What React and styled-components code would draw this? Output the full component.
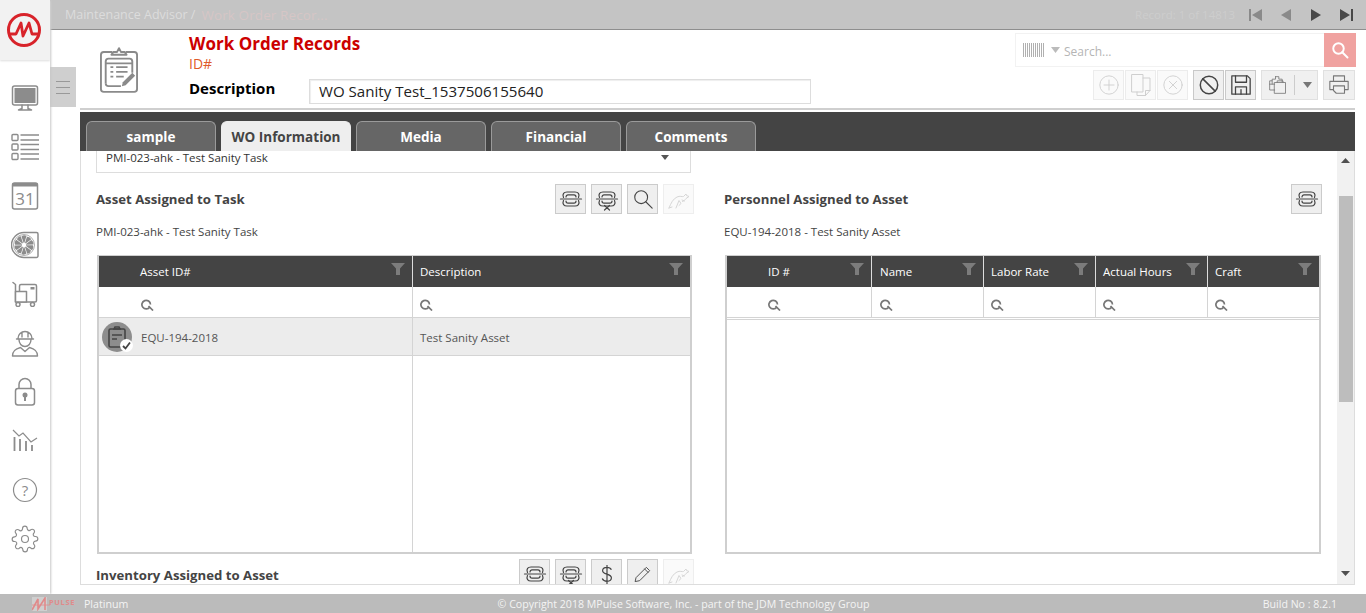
import React from 'react';
import styled, { createGlobalStyle } from 'styled-components';

const GlobalStyle = createGlobalStyle`
  html, body { margin: 0; padding: 0; height: 100%; overflow: hidden; background: #fff; }
  * { box-sizing: border-box; }
  body { font-family: "Open Sans", "Noto Sans", "Liberation Sans", sans-serif; }
`;

const Shell = styled.div`
  display: grid;
  grid-template-columns: 50px 1fr;
  grid-template-rows: 594px 19px;
  width: 1366px;
  height: 613px;
`;

const Sidebar = styled.nav`
  display: flex;
  flex-direction: column;
  align-items: center;
  background: #fff;
  box-shadow: 1px 0 2px #c8c8c8;
  z-index: 2;
`;

const LogoBox = styled.div`
  display: flex;
  align-items: center;
  justify-content: center;
  width: 100%;
  height: 60px;
  margin-bottom: 13px;
  padding-right: 2px;
  background: #f2f2f2;
  box-shadow: 0 1px 2px #ddd;
`;

const NavItem = styled.div`
  display: flex;
  align-items: center;
  justify-content: center;
  width: 100%;
  height: 49px;
  color: #8c8c8c;
`;

const Main = styled.div`
  display: flex;
  flex-direction: column;
  min-width: 0;
`;

const TopBar = styled.div`
  display: flex;
  align-items: center;
  height: 30px;
  padding: 0 5px 0 15px;
  background: #c4c4c4;
  border-bottom: 1px solid #8e8e8e;
  font-size: 12.5px;
  color: #dcdcdc;
`;

const Crumb = styled.span`
  color: ${p => p.$current ? '#d6c6c6' : '#dcdcdc'};
  margin-right: ${p => p.$current ? '0' : '6px'};
  font-size: ${p => p.$current ? '13.5px' : '12.5px'};
  letter-spacing: ${p => p.$current ? '0.1px' : '0'};
`;

const RecordInfo = styled.span`
  margin-left: auto;
  margin-right: 6px;
  color: #cdcdcd;
  font-size: 11.5px;
`;

const Pager = styled.button`
  display: flex;
  align-items: center;
  justify-content: center;
  width: 30px;
  height: 24px;
  padding: 0;
  border: 0;
  background: transparent;
  color: ${p => p.$dim ? '#8a8a8a' : '#484848'};
`;

const Work = styled.div`
  flex: 1;
  display: flex;
  min-height: 0;
`;

const Gutter = styled.div`
  width: 30px;
  flex: none;
`;

const Toggle = styled.button`
  display: flex;
  flex-direction: column;
  justify-content: center;
  gap: 5px;
  width: 26px;
  height: 40px;
  margin-top: 37px;
  padding: 0 6px;
  border: 0;
  background: #cfcfcf;
  span { display: block; height: 1px; background: #999; }
`;

const Column = styled.div`
  display: flex;
  flex-direction: column;
  width: 1275px;
  padding-bottom: 9px;
`;

const Header = styled.header`
  display: flex;
  height: 80px;
  margin-bottom: 2px;
  padding: 3px 0 0 20px;
  border-bottom: 2px solid #cfcfcf;
`;

const RecordIcon = styled.div`
  width: 40px;
  margin: 11px 49px 0 0;
  color: #8a8a8a;
`;

const TitleBlock = styled.div`
  flex: 1;
  min-width: 0;
`;

const Title = styled.h1`
  margin: -1px 0 0;
  font-size: 17px;
  line-height: 23px;
  font-weight: 700;
  color: #cc0000;
`;

const RecordId = styled.div`
  margin-bottom: 7px;
  font-size: 14px;
  line-height: 17px;
  color: #df5a2a;
`;

const DescRow = styled.div`
  display: flex;
  align-items: flex-start;
`;

const DescLabel = styled.label`
  width: 120px;
  font-size: 15px;
  line-height: 19px;
  font-weight: 700;
  color: #000;
`;

const DescInput = styled.div`
  width: 502px;
  height: 25px;
  padding-left: 9px;
  border: 1px solid #ddd;
  box-shadow: inset 1px 1px 1px #eee;
  font-size: 15.1px;
  line-height: 23px;
  color: #222;
`;

const ToolsBlock = styled.div`
  display: flex;
  flex-direction: column;
  align-items: flex-end;
  gap: 3px;
  width: 341px;
  margin-right: -1px;
`;

const SearchBox = styled.div`
  display: flex;
  align-items: center;
  width: 341px;
  height: 34px;
  padding-left: 7px;
  border: 1px solid #f2f2f2;
  color: #bbb;
  font-size: 12px;
`;

const CodeGap = styled.span`
  width: 7px;
`;

const SearchText = styled.span`
  flex: 1;
  margin-left: 4px;
  padding-top: 2px;
  color: #b5b5b5;
`;

const SearchButton = styled.button`
  display: flex;
  align-items: center;
  justify-content: center;
  width: 32px;
  height: 34px;
  margin: 0 -1px 0 0;
  padding: 0;
  border: 0;
  background: #f0a2a0;
  color: #fff;
`;

const ActionRow = styled.div`
  display: flex;
  width: 100%;
  padding: 0 1px 0 77px;
`;

const ToolButton = styled.button`
  display: flex;
  align-items: center;
  justify-content: center;
  flex: none;
  width: ${p => p.$w || 31}px;
  height: 30px;
  margin-left: ${p => p.$gap || 1}px;
  padding: 0;
  background: ${p => p.$off ? '#fafafa' : '#f0f0f0'};
  border: 1px solid ${p => p.$off ? '#ececec' : p.$mid ? '#e0e0e0' : '#c9c9c9'};
  color: ${p => p.$off ? '#cfcfcf' : p.$mid ? '#777' : '#444'};
`;

const SplitLine = styled.span`
  width: 1px;
  height: 20px;
  margin: 0 8px 0 6px;
  background: #ccc;
`;

const TabBar = styled.div`
  display: flex;
  align-items: flex-end;
  gap: 5px;
  height: 39px;
  padding: 0 0 0 6px;
  background: #444;
`;

const Tab = styled.div`
  width: 130px;
  height: 30px;
  border: 1px solid ${p => p.$active ? '#eee' : '#9a9a9a'};
  border-bottom: 0;
  border-radius: 6px 6px 0 0;
  background: ${p => p.$active ? '#eee' : '#666'};
  color: ${p => p.$active ? '#444' : '#fff'};
  font-size: 13.5px;
  font-weight: 700;
  line-height: 30px;
  text-align: center;
`;

const Content = styled.div`
  flex: 1;
  display: flex;
  min-height: 0;
  overflow: hidden;
  border: 1px solid #ddd;
  border-top: 0;
`;

const Scroller = styled.div`
  flex: 1;
  min-width: 0;
  padding: 0 15px;
  overflow: hidden;
`;

const SelectRow = styled.div`
  display: flex;
  align-items: center;
  justify-content: space-between;
  width: 595px;
  height: 22px;
  padding: 0 21px 8px 9px;
  border: 1px solid #ddd;
  border-top: 0;
  font-size: 11.5px;
  color: #333;
`;

const Caret = styled.span`
  width: 0;
  height: 0;
  border-left: 4.5px solid transparent;
  border-right: 4.5px solid transparent;
  border-top: 5px solid #555;
`;

const Panels = styled.div`
  display: grid;
  grid-template-columns: 597px 598px;
  column-gap: 31px;
  margin-top: 10px;
`;

const Panel = styled.section`
  min-width: 0;
`;

const PanelHead = styled.div`
  display: flex;
  align-items: center;
  justify-content: space-between;
  height: 31px;
  margin-right: ${p => p.$over ? -1 : 0}px;
`;

const PanelTitle = styled.h2`
  margin: 0;
  font-size: 13.2px;
  font-weight: 700;
  color: #444;
`;

const ButtonGroup = styled.div`
  display: flex;
  gap: 5px;
`;

const SmallButton = styled.button`
  display: flex;
  align-items: center;
  justify-content: center;
  width: 31px;
  height: 30px;
  padding: 0;
  background: ${p => p.$off ? '#fafafa' : '#efefef'};
  border: 1px solid ${p => p.$off ? '#eee' : '#cbcbcb'};
  color: ${p => p.$off ? '#d6d6d6' : '#444'};
`;

const SubText = styled.div`
  height: 41px;
  padding-top: 9px;
  font-size: 11.5px;
  line-height: 17px;
  color: #444;
`;

const Table = styled.div`
  display: flex;
  flex-direction: column;
  height: 299px;
  margin: 0 1px;
  border: 2px solid #cfcfcf;
  border-top-width: 1px;
`;

const Row = styled.div`
  display: grid;
  grid-template-columns: ${p => p.$cols};
  height: ${p => p.$h}px;
  flex: ${p => p.$fill ? 1 : 'none'};
  background: ${p => p.$bg || 'transparent'};
  border-bottom: ${p => p.$line ? '1px solid #d4d4d4' : '0'};
`;

const RowGap = styled.div`
  flex: none;
  height: 2px;
  border-bottom: 1px solid #d4d4d4;
`;

const HeadCell = styled.div`
  display: flex;
  align-items: center;
  justify-content: space-between;
  padding: 0 7px 0 ${p => p.$pad || 7}px;
  border-right: 1px solid #ddd;
  color: #fff;
  font-size: 11.5px;
  &:last-child { border-right: 0; }
  svg { margin-top: -5px; color: #7c7c7c; }
`;

const Cell = styled.div`
  display: flex;
  align-items: center;
  min-width: 0;
  padding-left: ${p => p.$pad || 7}px;
  padding-top: ${p => p.$top || 0}px;
  border-right: 1px solid #d4d4d4;
  font-size: 11.5px;
  color: #555;
  &:last-child { border-right: 0; }
`;

const Avatar = styled.div`
  position: relative;
  flex: none;
  width: 30px;
  height: 30px;
  margin: -1px 9px 0 -4px;
  border-radius: 50%;
  background: #8d8d8d;
  color: #444;
  display: flex;
  align-items: center;
  justify-content: center;
`;

const CheckBadge = styled.span`
  position: absolute;
  right: -1px;
  bottom: 0;
  display: flex;
  align-items: center;
  justify-content: center;
  width: 13px;
  height: 13px;
  border-radius: 50%;
  background: #fff;
  color: #444;
`;

const InventoryHead = styled(PanelHead)`
  align-items: flex-start;
  margin-top: 5px;
  h2 { margin-top: 7px; }
`;

const ScrollTrack = styled.div`
  display: flex;
  flex-direction: column;
  align-items: center;
  flex: none;
  width: 17px;
  background: #f1f1f1;
  color: #505050;
`;

const ScrollArrow = styled.div`
  height: 45px;
  padding-top: 7px;
  width: 100%;
  display: flex;
  justify-content: center;
  align-items: flex-start;
  &:last-child { height: 20px; padding-top: 7px; }
`;

const ScrollThumb = styled.div`
  width: 14px;
  height: 206px;
  background: #bdbdbd;
`;

const ScrollSpace = styled.div`
  flex: 1;
`;

const Footer = styled.footer`
  grid-column: 1 / 3;
  display: grid;
  grid-template-columns: 1fr auto 1fr;
  align-items: center;
  padding: 0 29px 0 30px;
  background: #bbb;
  color: #f4f4f4;
  font-size: 10.6px;
  z-index: 3;
`;

const Brand = styled.div`
  display: flex;
  align-items: center;
  gap: 4px;
  margin-left: 2px;
`;

const BrandMark = styled.div`
  position: relative;
  display: flex;
  width: 48px;
  height: 14px;
  color: #e08a8a;
`;

const BrandBack = styled.span`
  position: absolute;
  left: 0;
  top: 0;
  width: 15px;
  height: 14px;
  background: #cfcfcf;
`;

const BrandSwoosh = styled.svg`
  z-index: 1;
`;

const BrandWord = styled.span`
  position: absolute;
  left: 17px;
  top: 0;
  font-size: 7.5px;
  line-height: 11px;
  font-weight: 700;
  letter-spacing: 0.6px;
  color: #e08a8a;
`;

const Build = styled.span`
  justify-self: end;
`;

const Stroke = ({ size = 24, box = 24, sw = 1.3, children }) => (
  <svg width={size} height={size} viewBox={`0 0 ${box} ${box}`} fill="none" stroke="currentColor" strokeWidth={sw} strokeLinecap="round" strokeLinejoin="round">{children}</svg>
);

const LinkIcon = ({ cross }) => (
  <Stroke size={24} sw={1.2}>
    <path d="M1.500 12h21" />
    <path d="M4.500 10.500C3 7 5 5 8 5h8c3 0 5 2 3.500 5.500" />
    <path d="M4.500 13.500C3 17 5 19 8 19h8c3 0 5-2 3.500-5.500" />
    <path d="M7 10c0-1.500 1-2.200 2-2.200h6c1 0 2 .7 2 2.200M7 14c0 1.500 1 2.200 2 2.200h6c1 0 2-.7 2-2.200" />
    {cross && <path d="M9.500 18.500l5 4.500M14.500 18.500l-5 4.500" />}
  </Stroke>
);

const Kangaroo = () => (
  <Stroke size={24} sw={1}>
    <path d="M2 21c2-5 4-9 8-11 3-1.500 5 0 6.500-.5L19 7l.5 1.500L22 9.500l-3 2c-1 1.500-2 2.500-3.500 3" />
    <path d="M9 21l3-7.500 2 3-2 2M2 21l3-1M15 13l2.500 1" />
  </Stroke>
);

const Magnifier = ({ size = 22, sw = 1.2 }) => (
  <Stroke size={size} sw={sw}>
    <circle cx="10" cy="10" r="7" />
    <path d="M15 15l7 7" />
  </Stroke>
);

const Funnel = () => (
  <svg width="14" height="12" viewBox="0 0 14 12" fill="currentColor"><path d="M0 0h14L9 5.500V12H5V5.500z" /></svg>
);

const FilterGlass = () => (
  <svg width="13" height="13" viewBox="0 0 13 13" fill="none" stroke="#777" strokeWidth="1.700"><path d="M8.800 9A4.300 4.300 0 1 1 9.500 6.500" /><path d="M7.500 8l4.500 4.500" /></svg>
);

const Logo = () => (
  <svg width="36" height="36" viewBox="0 0 36 36" fill="none" stroke="#d8232a" strokeWidth="3">
    <circle cx="18" cy="18" r="15.500" />
    <path d="M2 22h8l5-11 2 13 6-13 3 11h8" strokeWidth="2.800" strokeLinejoin="round" />
  </svg>
);

const MonitorIcon = () => (
  <Stroke size={30} box={30} sw={1.500}>
    <rect x="2.500" y="3" width="25" height="19" rx="2" />
    <rect x="4.500" y="5" width="21" height="15" fill="currentColor" stroke="none" />
    <path d="M12 22v3.500L8.500 27h13L18 25.500V22" />
  </Stroke>
);

const ListIcon = () => (
  <Stroke size={30} box={30} sw={1.400}>
    <rect x="2" y="2.500" width="6" height="6" rx="1" />
    <rect x="2" y="12" width="6" height="6" rx="1" />
    <rect x="2" y="21.500" width="6" height="6" rx="1" />
    <path d="M10.500 3h18.500M10.500 8h18.500M10.500 12.500h18.500M10.500 17.500h18.500M10.500 22h18.500M10.500 27h18.500" strokeLinecap="butt" />
  </Stroke>
);

const CalendarIcon = () => (
  <svg width="28" height="30" viewBox="0 0 28 30">
    <rect x="1.500" y="2" width="25" height="26" rx="2" fill="none" stroke="currentColor" strokeWidth="1.500" />
    <rect x="1.500" y="2" width="25" height="3.500" fill="currentColor" />
    <text x="14" y="24" textAnchor="middle" fontSize="17" fontFamily="Open Sans, sans-serif" fill="currentColor">31</text>
  </svg>
);

const FAN_ANGLES = [0, 36, 72, 108, 144, 180, 216, 252, 288, 324];

const FanIcon = () => (
  <svg width="28" height="28" viewBox="0 0 28 28" fill="none" stroke="currentColor" strokeWidth="1.500">
    <path d="M13 1.500h12.500a1.500 1.500 0 0 1 1.500 1.500v22a1.500 1.500 0 0 1-1.500 1.500H13a12.500 12.500 0 0 1 0-25z" />
    <circle cx="13" cy="14" r="10.500" strokeWidth="0.700" />
    <g fill="currentColor" stroke="none">
      {FAN_ANGLES.map(a => <path key={a} d="M13 13L10.500 5.500Q13 3.500 15.500 5z" transform={`rotate(${a} 13 14)`} />)}
    </g>
    <circle cx="13" cy="14" r="2.200" fill="#fff" stroke="none" />
  </svg>
);

const CartIcon = () => (
  <Stroke size={26} box={26} sw={1.500}>
    <path d="M1 1.500l2.500 2V21" />
    <rect x="7.500" y="3.500" width="17" height="17.500" rx="1.500" />
    <rect x="3.500" y="10.500" width="11" height="10.500" fill="#fff" />
    <rect x="18.500" y="6" width="4" height="2.500" fill="currentColor" stroke="none" />
    <circle cx="6" cy="23.500" r="2" />
    <circle cx="20.500" cy="23.500" r="2" />
  </Stroke>
);

const WorkerIcon = () => (
  <Stroke size={28} box={28} sw={1.400}>
    <path d="M7 9.500a7 7 0 0 1 14 0M5.500 10h17M11 3.500V8M17 3.500V8" />
    <path d="M8 10.500c0 4 2.500 7 6 7s6-3 6-7" />
    <path d="M1.500 27c0-5 2.500-7 8-8.500l4.500 4 4.500-4c5.500 1.500 8 3.500 8 8.500z" />
  </Stroke>
);

const LockIcon = () => (
  <svg width="22" height="30" viewBox="0 0 22 30" fill="none" stroke="currentColor" strokeWidth="1.500">
    <path d="M5 12V7.500a6 6 0 0 1 12 0V12" />
    <rect x="1.500" y="11.500" width="19" height="16.500" rx="2.500" />
    <circle cx="11" cy="18" r="2.500" fill="currentColor" stroke="none" />
    <path d="M11 19v5" strokeWidth="2" />
  </svg>
);

const ChartIcon = () => (
  <svg width="26" height="24" viewBox="0 0 26 24" fill="none" stroke="currentColor">
    <path d="M1 1l6 6 4-3 8 9 6-4" strokeWidth="1.200" />
    <path d="M2.500 8v14M8 10v12M14 12v10M20 16v6" strokeWidth="1.800" />
  </svg>
);

const HelpIcon = () => (
  <svg width="26" height="26" viewBox="0 0 26 26" fill="none" stroke="currentColor" strokeWidth="1.200">
    <circle cx="13" cy="13" r="11.500" />
    <text x="13" y="18.500" textAnchor="middle" fontSize="15" stroke="none" fill="currentColor" fontFamily="Open Sans, sans-serif">?</text>
  </svg>
);

const GearIcon = () => (
  <Stroke size={28} box={24} sw={1}>
    <circle cx="12" cy="12" r="3" />
    <path d="M19.400 15a1.650 1.650 0 0 0 .33 1.820l.06.06a2 2 0 1 1-2.830 2.830l-.06-.06a1.650 1.650 0 0 0-2.800 1.170V21a2 2 0 1 1-4 0v-.09a1.650 1.650 0 0 0-2.800-1.170l-.06.06a2 2 0 1 1-2.830-2.830l.06-.06a1.650 1.650 0 0 0-1.170-2.800H3a2 2 0 1 1 0-4h.09a1.650 1.650 0 0 0 1.170-2.800l-.06-.06a2 2 0 1 1 2.830-2.830l.06.06a1.650 1.650 0 0 0 2.800-1.170V3a2 2 0 1 1 4 0v.09a1.650 1.650 0 0 0 2.800 1.170l.06-.06a2 2 0 1 1 2.830 2.830l-.06.06a1.650 1.650 0 0 0 1.170 2.800H21a2 2 0 1 1 0 4h-.09a1.650 1.650 0 0 0-1.510 1z" />
  </Stroke>
);

const ClipboardPen = () => (
  <svg width="38" height="52" viewBox="0 0 40 52" fill="none" stroke="currentColor" strokeWidth="2">
    <path d="M13 7H4a3 3 0 0 0-3 3v36a3 3 0 0 0 3 3h32a3 3 0 0 0 3-3V10a3 3 0 0 0-3-3h-9" />
    <path d="M12 10l2-3h4l2-4 2 4 4 0 2 3z" strokeLinejoin="round" />
    <path d="M6 40V17a3 3 0 0 1 3-3h22a3 3 0 0 1 3 3v12M6 19h28" />
    <path d="M6 40a3 3 0 0 0 3 3h13" />
    <path d="M11 23h3M11 28h3M11 33h3M17 23h12M17 28h12M17 33h8" strokeWidth="2" />
    <path d="M23 43l1-4 10-10 3 3-10 10z" fill="currentColor" stroke="none" />
  </svg>
);

const PagerIcon = ({ kind }) => {
  const shapes = {
    first: 'M1 2h2v12H1zM14 2v12L4 8z',
    prev: 'M13 2v12L3 8z',
    next: 'M3 2v12l10-6z',
    last: 'M13 2h2v12h-2zM2 2v12l10-6z',
  };
  return <svg width="16" height="16" viewBox="0 0 16 16" fill="currentColor"><path d={shapes[kind]} /></svg>;
};

const CircleGlyph = ({ cross }) => (
  <Stroke size={22} sw={1}>
    <circle cx="12" cy="12" r="10" />
    {cross ? <path d="M8 8l8 8M16 8l-8 8" /> : <path d="M12 6.500v11M6.500 12h11" />}
  </Stroke>
);

const CopyPages = () => (
  <Stroke size={24} sw={1}>
    <path d="M3 1.500h11v17.500H3z" />
    <path d="M14 5h7v12.500L16.500 22.500H8V19" />
    <path d="M21 17.500h-4.500v5" />
  </Stroke>
);

const BlockIcon = () => (
  <Stroke size={22} sw={1.600}>
    <circle cx="12" cy="12" r="9.500" />
    <path d="M5.300 5.300l13.400 13.400" />
  </Stroke>
);

const SaveIcon = () => (
  <Stroke size={22} sw={1.400}>
    <path d="M2 2h17l3 3v17H2z" />
    <path d="M6 2v7h12V2M6 22v-8h12v8M12 17v5" />
  </Stroke>
);

const PasteIcon = () => (
  <Stroke size={20} sw={1}>
    <path d="M9 2h4v3h4v3M9 2v3H5v2h-3v11h6" />
    <path d="M8 9h13v13H8z" />
    <path d="M11 9V7h7v2M2 11h6M5 7v4" />
  </Stroke>
);

const PrintIcon = () => (
  <Stroke size={22} sw={1.200}>
    <path d="M6 8V2h12v6M6 17H2V8h20v9h-4" />
    <path d="M6 13h12v8h-9l-3-3z" />
  </Stroke>
);

const BARCODE_BARS = [0, 2, 4, 6, 8, 10, 12, 14, 16, 18, 20];

const Barcode = () => (
  <svg width="21" height="14" viewBox="0 0 21 14" fill="#b0b0b0">
    {BARCODE_BARS.map(x => <rect key={x} x={x} width="1" height="14" />)}
  </svg>
);

const CARET_DOWN = (
  <svg width="9" height="6" viewBox="0 0 9 6" fill="currentColor"><path d="M0 0h9L4.500 6z" /></svg>
);

const ASSET_COLS = '314px 1fr';
const STAFF_COLS = '145px 112px 112px 112px 1fr';

const navIcons = [MonitorIcon, ListIcon, CalendarIcon, FanIcon, CartIcon, WorkerIcon, LockIcon, ChartIcon, HelpIcon, GearIcon];
const tabs = ['sample', 'WO Information', 'Media', 'Financial', 'Comments'];
const staffHeaders = [['ID #', 41], ['Name', 8], ['Labor Rate', 7], ['Actual Hours', 7], ['Craft', 7]];

export default function App() {
  return (
    <Shell>
      <GlobalStyle />
      <Sidebar>
        <LogoBox><Logo /></LogoBox>
        {navIcons.map((Icon, i) => <NavItem key={i}><Icon /></NavItem>)}
      </Sidebar>

      <Main>
        <TopBar>
          <Crumb>Maintenance Advisor /</Crumb>
          <Crumb $current>Work Order Recor...</Crumb>
          <RecordInfo>Record: 1 of 14813</RecordInfo>
          <Pager $dim><PagerIcon kind="first" /></Pager>
          <Pager $dim><PagerIcon kind="prev" /></Pager>
          <Pager><PagerIcon kind="next" /></Pager>
          <Pager><PagerIcon kind="last" /></Pager>
        </TopBar>

        <Work>
          <Gutter>
            <Toggle><span /><span /><span /></Toggle>
          </Gutter>
          <Column>
            <Header>
              <RecordIcon><ClipboardPen /></RecordIcon>
              <TitleBlock>
                <Title>Work Order Records</Title>
                <RecordId>ID#</RecordId>
                <DescRow>
                  <DescLabel>Description</DescLabel>
                  <DescInput>WO Sanity Test_1537506155640</DescInput>
                </DescRow>
              </TitleBlock>
              <ToolsBlock>
                <SearchBox>
                  <Barcode />
                  <CodeGap />
                  {CARET_DOWN}
                  <SearchText>Search...</SearchText>
                  <SearchButton><Magnifier size={18} sw={2.600} /></SearchButton>
                </SearchBox>
                <ActionRow>
                  <ToolButton $off><CircleGlyph /></ToolButton>
                  <ToolButton $off><CopyPages /></ToolButton>
                  <ToolButton $off><CircleGlyph cross /></ToolButton>
                  <ToolButton $gap={5}><BlockIcon /></ToolButton>
                  <ToolButton><SaveIcon /></ToolButton>
                  <ToolButton $gap={5} $w={57} $mid>
                    <PasteIcon />
                    <SplitLine />
                    {CARET_DOWN}
                  </ToolButton>
                  <ToolButton $gap={5} $w={32} $mid><PrintIcon /></ToolButton>
                </ActionRow>
              </ToolsBlock>
            </Header>

            <TabBar>
              {tabs.map(t => <Tab key={t} $active={t === 'WO Information'}>{t}</Tab>)}
            </TabBar>

            <Content>
              <Scroller>
                <SelectRow>
                  PMI-023-ahk - Test Sanity Task
                  <Caret />
                </SelectRow>

                <Panels>
                  <Panel>
                    <PanelHead $over>
                      <PanelTitle>Asset Assigned to Task</PanelTitle>
                      <ButtonGroup>
                        <SmallButton><LinkIcon /></SmallButton>
                        <SmallButton><LinkIcon cross /></SmallButton>
                        <SmallButton><Magnifier /></SmallButton>
                        <SmallButton $off><Kangaroo /></SmallButton>
                      </ButtonGroup>
                    </PanelHead>
                    <SubText>PMI-023-ahk - Test Sanity Task</SubText>
                    <Table>
                      <Row $cols={ASSET_COLS} $h={31} $bg="#444">
                        <HeadCell $pad={41}>Asset ID#<Funnel /></HeadCell>
                        <HeadCell>Description<Funnel /></HeadCell>
                      </Row>
                      <Row $cols={ASSET_COLS} $h={31} $line>
                        <Cell $pad={42} $top={5}><FilterGlass /></Cell>
                        <Cell $top={5}><FilterGlass /></Cell>
                      </Row>
                      <Row $cols={ASSET_COLS} $h={38} $bg="#ececec" $line>
                        <Cell $pad={7} $top={1}>
                          <Avatar>
                            <svg width="18" height="22" viewBox="0 0 18 22" fill="none" stroke="currentColor" strokeWidth="1.600">
                              <rect x="1" y="3" width="16" height="18" rx="1.500" />
                              <path d="M6 3l1-2h4l1 2zM4 9h10M4 13h5" />
                            </svg>
                            <CheckBadge>
                              <svg width="9" height="9" viewBox="0 0 9 9" fill="none" stroke="currentColor" strokeWidth="1.800"><path d="M1 5l2.500 2.500L8 1.500" /></svg>
                            </CheckBadge>
                          </Avatar>
                          EQU-194-2018
                        </Cell>
                        <Cell $top={1}>Test Sanity Asset</Cell>
                      </Row>
                      <Row $cols={ASSET_COLS} $fill>
                        <Cell />
                        <Cell />
                      </Row>
                    </Table>
                    <InventoryHead $over>
                      <PanelTitle>Inventory Assigned to Asset</PanelTitle>
                      <ButtonGroup>
                        <SmallButton><LinkIcon /></SmallButton>
                        <SmallButton><LinkIcon cross /></SmallButton>
                        <SmallButton><svg width="16" height="23" viewBox="0 0 20 26" fill="none" stroke="currentColor" strokeWidth="1.500"><path d="M15.500 7c-1-2-3-3-5.500-3-3 0-5.500 1.500-5.500 4.200 0 5.600 11 3 11 9 0 2.800-2.500 4.300-5.500 4.300-3 0-5-1.300-6-3.500M10 1v24" /></svg></SmallButton>
                        <SmallButton><Stroke size={20} sw={1.100}><path d="M4 16L16 4l4 4L8 20l-5 1zM14 6l4 4" /></Stroke></SmallButton>
                        <SmallButton $off><Kangaroo /></SmallButton>
                      </ButtonGroup>
                    </InventoryHead>
                  </Panel>

                  <Panel>
                    <PanelHead>
                      <PanelTitle>Personnel Assigned to Asset</PanelTitle>
                      <ButtonGroup>
                        <SmallButton><LinkIcon /></SmallButton>
                      </ButtonGroup>
                    </PanelHead>
                    <SubText>EQU-194-2018 - Test Sanity Asset</SubText>
                    <Table>
                      <Row $cols={STAFF_COLS} $h={31} $bg="#444">
                        {staffHeaders.map(([label, pad]) => (
                          <HeadCell key={label} $pad={pad}>{label}<Funnel /></HeadCell>
                        ))}
                      </Row>
                      <Row $cols={STAFF_COLS} $h={31} $line>
                        {staffHeaders.map(([label, pad]) => (
                          <Cell key={label} $pad={pad} $top={5}><FilterGlass /></Cell>
                        ))}
                      </Row>
                      <RowGap />
                    </Table>
                  </Panel>
                </Panels>
              </Scroller>

              <ScrollTrack>
                <ScrollArrow>
                  <svg width="9" height="5" viewBox="0 0 9 5" fill="currentColor"><path d="M0 5h9L4.500 0z" /></svg>
                </ScrollArrow>
                <ScrollThumb />
                <ScrollSpace />
                <ScrollArrow>
                  <svg width="9" height="5" viewBox="0 0 9 5" fill="currentColor"><path d="M0 0h9L4.500 5z" /></svg>
                </ScrollArrow>
              </ScrollTrack>
            </Content>
          </Column>
        </Work>
      </Main>

      <Footer>
        <Brand>
          <BrandMark>
            <BrandBack />
            <BrandSwoosh width="20" height="14" viewBox="0 0 20 14" fill="none" stroke="currentColor" strokeWidth="1.600"><path d="M0 13L6 2v10L13 1v12" /><path d="M0 8h18" strokeWidth="0.800" /></BrandSwoosh>
            <BrandWord>PULSE</BrandWord>
          </BrandMark>
          Platinum
        </Brand>
        <span>© Copyright 2018 MPulse Software, Inc. - part of the JDM Technology Group</span>
        <Build>Build No : 8.2.1</Build>
      </Footer>
    </Shell>
  );
}
